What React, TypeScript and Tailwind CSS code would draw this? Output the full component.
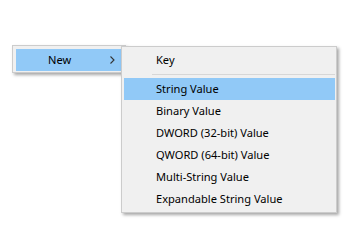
const items = [
  "String Value",
  "Binary Value",
  "DWORD (32-bit) Value",
  "QWORD (64-bit) Value",
  "Multi-String Value",
  "Expandable String Value",
];

function Arrow() {
  return (
    <svg width="5" height="8" viewBox="0 0 5 8" className="text-[#333]">
      <polyline points="0.5,0.5 4,4 0.5,7.5" fill="none" stroke="currentColor" strokeWidth="1.1" />
    </svg>
  );
}

export default function App() {
  return (
    <div
      className="relative w-[357px] h-[241px] bg-white text-[11.1px] text-black overflow-hidden"
      style={{ fontFamily: '"Segoe UI", "Noto Sans", "Open Sans", sans-serif' }}
    >
      {/* parent menu */}
      <div className="absolute left-[12px] top-[45px] w-[114px] border border-[#cccccc] bg-[#f0f0f0] pl-[3px] pr-[3px] pt-[3px] pb-[1px] shadow-[2px_2px_3px_rgba(0,0,0,0.35)]">
        <div className="flex h-[22px] items-center bg-[#91c9f7] pl-[32px] pr-[7px]">
          <span className="flex-1 leading-none">New</span>
          <Arrow />
        </div>
      </div>

      {/* submenu */}
      <div className="absolute left-[121px] top-[46px] flex w-[216px] flex-col border border-[#cccccc] bg-[#f0f0f0] pl-[2px] pr-[1px] pt-[2px] pb-[2px] shadow-[2px_2px_3px_rgba(0,0,0,0.35)]">
        <div className="flex h-[22px] items-center pl-[32px] leading-none">Key</div>
        <div className="flex h-[7px] items-center pl-[28px]">
          <div className="h-px w-full bg-[#d7d7d7]" />
        </div>
        {items.map((label, i) => (
          <div
            key={label}
            className={`flex h-[22px] items-center pl-[32px] leading-none ${i === 0 ? "bg-[#91c9f7]" : ""}`}
          >
            {label}
          </div>
        ))}
      </div>
    </div>
  );
}
